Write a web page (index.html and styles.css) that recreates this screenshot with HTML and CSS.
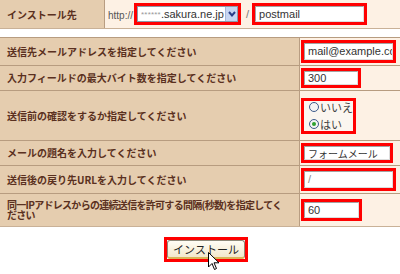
FILE: index.html
```
<!doctype html>
<html lang="ja">
<head>
    <meta charset="UTF-8">
    <title>インストール</title>
    <link rel="stylesheet" href="styles.css">
</head>
<body>
<div id="page">
    <div class="table top">
        <div class="label">インストール先</div>
        <div class="value">
            <span class="proto">http://</span>
            <span class="mark">
                <span class="select"><span class="host"><span class="stars">******</span>.sakura.ne.jp</span><span class="drop"><svg width="10" height="14" viewBox="0 0 10 14"><path d="M2 5 L5 8.5 L8 5" fill="none" stroke="#2a3f8a" stroke-width="2"/></svg></span></span>
            </span>
            <span class="slash">/</span>
            <span class="mark"><span class="field w-dir">postmail</span></span>
        </div>
    </div>

    <div class="table form">
        <div class="label r1">送信先メールアドレスを指定してください</div>
        <div class="value r1"><span class="mark"><span class="field w-mail">mail@example.com</span></span></div>

        <div class="label r2">入力フィールドの最大バイト数を指定してください</div>
        <div class="value r2"><span class="mark"><span class="field w-num">300</span></span></div>

        <div class="label r3">送信前の確認をするか指定してください</div>
        <div class="value r3">
            <span class="mark radios">
                <label class="radio"><span class="dot"></span>いいえ</label>
                <label class="radio"><span class="dot on"></span>はい</label>
            </span>
        </div>

        <div class="label r4">メールの題名を入力してください</div>
        <div class="value r4"><span class="mark"><span class="field w-subj">フォームメール</span></span></div>

        <div class="label r5">送信後の戻り先URLを入力してください</div>
        <div class="value r5"><span class="mark"><span class="field w-mail grey">/</span></span></div>

        <div class="label r6 tight">同一IPアドレスからの連続送信を許可する間隔(秒数)を指定してください</div>
        <div class="value r6"><span class="mark"><span class="field w-sec">60</span></span></div>
    </div>

    <div class="actions">
        <span class="mark"><span class="button">インストール</span></span>
    </div>

    <svg class="cursor" width="12" height="20" viewBox="0 0 12 20">
        <path d="M0.5 0.5 L0.5 15 L4 11.5 L6.5 17.5 L8.5 16.5 L6 10.8 L11 10.8 Z" fill="#fff" stroke="#000" stroke-width="1"/>
    </svg>
</div>
</body>
</html>
```

FILE: styles.css
```
* {
    margin: 0;
    padding: 0;
    box-sizing: border-box;
}

body {
    background-color: #fff;
    font-family: "Noto Sans CJK JP", "DejaVu Sans", sans-serif;
}

#page {
    width: 400px;
    height: 274px;
    position: relative;
    overflow: hidden;
}

.table {
    display: grid;
    border-bottom: 1px solid #c9b197;
}

.top {
    grid-template-columns: 105px 1fr;
    height: 29px;
}

.form {
    margin-top: 8px;
    grid-template-columns: 300px 1fr;
    grid-template-rows: 28px 25px 50px 25px 28px 32px;
    border-top: 1px solid #b79c80;
}

.label {
    background-color: #e5cdaf;
    color: #5a3020;
    font-size: 10px;
    font-weight: bold;
    line-height: 10px;
    padding: 0 22px 0 7px;
    display: flex;
    align-items: center;
    border-right: 1px solid #b89d82;
}

.label.tight {
    letter-spacing: -0.7px;
    padding-right: 15px;
}

.value {
    background-color: #fdf1e4;
    display: flex;
    align-items: center;
    padding-left: 1px;
}

.form .label,
.form .value {
    border-bottom: 1px solid #b79c80;
}

.form .r6 {
    border-bottom: none;
}

.top .label {
    padding-top: 1px;
}

.proto {
    color: #555;
    font-family: "Liberation Sans", sans-serif;
    font-size: 10px;
    margin: 2px 1px 0 2px;
}

.slash {
    color: #777;
    font-family: "Liberation Sans", sans-serif;
    font-size: 11px;
    margin: 0 3px 0 5px;
}

.mark {
    border: 3px solid #f00;
    display: inline-flex;
}

.top .mark {
    margin-top: -1px;
}

.select {
    width: 101px;
    height: 16px;
    background: #fff;
    border: 1px solid #8c9aa8;
    font-family: "Liberation Sans", sans-serif;
    font-size: 11px;
    color: #333;
    line-height: 14px;
    padding-left: 3px;
    display: flex;
    justify-content: space-between;
}

.host {
    white-space: nowrap;
    overflow: hidden;
}

.stars {
    color: #999;
    font-size: 8px;
    letter-spacing: 0.2px;
    vertical-align: 1px;
}

.drop {
    flex: none;
    width: 12px;
    height: 14px;
    background: #c7d6f2;
    border-left: 1px solid #a8b8d8;
    display: flex;
    justify-content: center;
}

.field {
    height: 16px;
    background: #fff;
    border: 1px solid #a3a3a3;
    border-right-color: #ddd;
    border-bottom-color: #ddd;
    font-family: "Liberation Sans", sans-serif;
    font-size: 11px;
    line-height: 14px;
    color: #333;
    padding-left: 3px;
    white-space: nowrap;
    overflow: hidden;
}

.w-dir {
    width: 109px;
}

.w-mail {
    width: 89px;
    height: 17px;
    line-height: 15px;
}

.w-num {
    width: 54px;
    height: 14px;
    line-height: 13px;
}

.w-subj {
    width: 86px;
    height: 14px;
    line-height: 13px;
    font-family: "Noto Sans CJK JP", sans-serif;
    font-size: 10px;
}

.w-sec {
    width: 55px;
}

.grey {
    color: #888;
}

.radios {
    width: 55px;
    height: 36px;
    flex-direction: column;
    justify-content: center;
    padding-left: 5px;
    gap: 4px;
    background: #fbf6f0;
}

.radio {
    display: flex;
    align-items: center;
    font-size: 11px;
    line-height: 13px;
    color: #444;
}

.dot {
    width: 10px;
    height: 10px;
    border: 1px solid #3d5a8a;
    border-radius: 50%;
    background: #f4f4f4;
    margin-right: 1px;
    display: flex;
    align-items: center;
    justify-content: center;
}

.dot.on::after {
    content: "";
    width: 4px;
    height: 4px;
    border-radius: 50%;
    background: #2fa12f;
}

.actions {
    display: flex;
    justify-content: center;
    padding: 10px 0 0 12px;
}

.button {
    width: 78px;
    height: 19px;
    background: linear-gradient(#fffdf5, #f2e8cc);
    border: 1px solid #8f8a7a;
    border-bottom: 2px solid #d9b55a;
    border-radius: 3px;
    font-size: 11px;
    line-height: 16px;
    color: #222;
    text-align: center;
}

.cursor {
    position: absolute;
    left: 208px;
    top: 252px;
}
```
